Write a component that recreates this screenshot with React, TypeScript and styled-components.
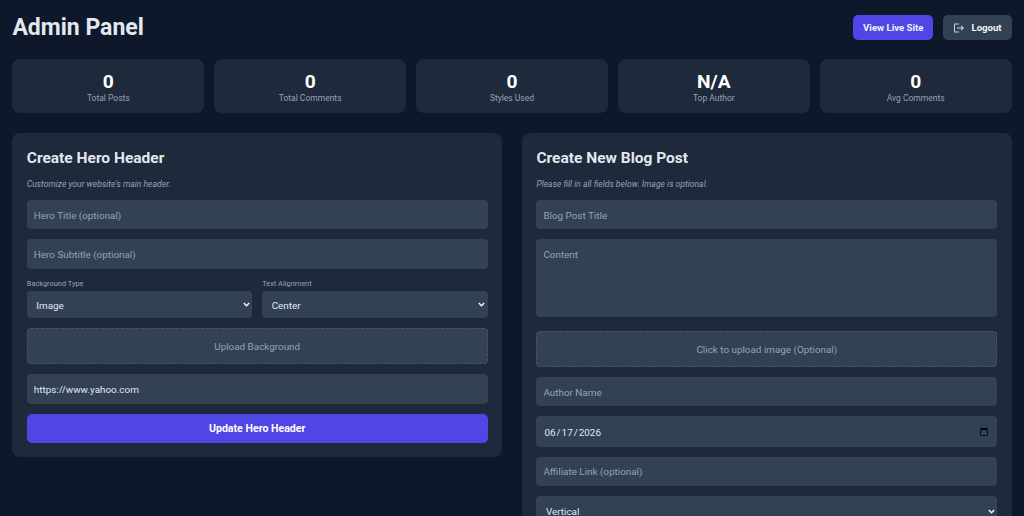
import React from "react";
import styled, { createGlobalStyle } from "styled-components";
import { MdLogout } from "react-icons/md";

const chevron = `url("data:image/svg+xml,%3Csvg xmlns='http://www.w3.org/2000/svg' viewBox='0 0 7 5'%3E%3Cpath d='M.8 1l2.7 2.7L6.2 1' fill='none' stroke='%23f1f5f9' stroke-width='1.5'/%3E%3C/svg%3E")`;

const Global = createGlobalStyle`
  html, body { margin: 0; padding: 0; background: #0f172a; }
  body { font-family: Roboto, "Noto Sans", sans-serif; color: #e2e8f0; }
  * { box-sizing: border-box; }
  ::-webkit-scrollbar { display: none; }
`;

const Page = styled.div`
  padding: 12px 12.4px;
  background: #0f172a;
  min-height: 100vh;
`;
const Header = styled.header`
  display: flex;
  justify-content: space-between;
  align-items: center;
  height: 31px;
  margin-bottom: 16px;
`;
const Title = styled.h1`
  margin: 1px 0 0;
  font-size: 23px;
  line-height: 32px;
  font-weight: 700;
  color: #e2e8f0;
`;
const Actions = styled.div`
  display: flex;
  gap: 10px;
`;
const HeaderButton = styled.button<{ $primary?: boolean }>`
  display: flex;
  align-items: center;
  gap: 6px;
  height: 25px;
  padding: 0 10px;
  border: none;
  border-radius: 5px;
  font-family: inherit;
  font-size: 9.6px;
  font-weight: 700;
  color: #f1f5f9;
  background: ${(p) => (p.$primary ? "#4f46e5" : "#334155")};
  svg { color: #cbd5e1; flex: none; }
`;
const Stats = styled.section`
  display: grid;
  grid-template-columns: repeat(5, 1fr);
  gap: 10px;
  margin-bottom: 19.6px;
`;
const Stat = styled.div`
  height: 54.4px;
  padding-top: 11px;
  border-radius: 8px;
  background: #1e293b;
  text-align: center;
`;
const StatValue = styled.div`
  font-size: 19.2px;
  line-height: 23px;
  font-weight: 700;
  color: #fff;
`;
const StatLabel = styled.div`
  font-size: 8.5px;
  line-height: 10px;
  color: #94a3b8;
`;
const Columns = styled.main`
  display: grid;
  grid-template-columns: 1fr 1fr;
  gap: 20px;
  align-items: start;
`;
const Panel = styled.section`
  padding: 14.4px;
  border-radius: 8px;
  background: #1e293b;
`;
const PanelTitle = styled.h2`
  margin: 1px 0 10.6px;
  font-size: 15.5px;
  line-height: 20px;
  font-weight: 700;
  color: #e2e8f0;
`;
const Hint = styled.p`
  margin: 0 0 10px;
  font-size: 8.6px;
  line-height: 11px;
  font-style: italic;
  color: #94a3b8;
`;
const Form = styled.form`
  display: flex;
  flex-direction: column;
  gap: 10px;
`;
const fieldBase = `
  width: 100%;
  border: none;
  outline: none;
  border-radius: 4px;
  background-color: #334155;
  color: #e2e8f0;
  font-family: inherit;
  font-size: 9.9px;
  &::placeholder { color: #94a3b8; opacity: 1; }
`;
const Input = styled.input`
  ${fieldBase}
  height: 29.4px;
  padding: 1px 7px 0;
`;
const DateInput = styled(Input)`
  height: 30.4px;
  &::-webkit-calendar-picker-indicator { width: 10px; height: 10px; padding: 0; margin-right: 1px; }
`;
const TextArea = styled.textarea`
  ${fieldBase}
  display: block;
  height: 78px;
  padding: 10px 7px;
  resize: none;
  margin-bottom: 3.6px;
`;
const Select = styled.select<{ $tall?: boolean }>`
  ${fieldBase}
  appearance: none;
  height: ${(p) => (p.$tall ? "30px" : "27.3px")};
  padding: 1px 12px 0 9.5px;
  background-image: ${chevron};
  background-repeat: no-repeat;
  background-position: right 2.5px center;
  background-size: 7px 5px;
`;
const Row = styled.div`
  display: grid;
  grid-template-columns: 1fr 1fr;
  gap: 10px;
`;
const Field = styled.label`
  display: flex;
  flex-direction: column;
  gap: 3px;
`;
const FieldLabel = styled.span`
  font-size: 7.4px;
  line-height: 9.2px;
  color: #94a3b8;
`;
const Upload = styled.div`
  display: flex;
  align-items: center;
  justify-content: center;
  height: 36px;
  padding-top: 1px;
  border: 1px dashed #475569;
  border-radius: 4px;
  background: #334155;
  font-size: 9.9px;
  color: #94a3b8;
`;
const Submit = styled.button`
  height: 29.4px;
  border: none;
  border-radius: 5px;
  background: #4f46e5;
  color: #fff;
  font-family: inherit;
  font-size: 10.6px;
  font-weight: 700;
`;

const stats = [
  ["0", "Total Posts"],
  ["0", "Total Comments"],
  ["0", "Styles Used"],
  ["N/A", "Top Author"],
  ["0", "Avg Comments"],
];

export default function App() {
  return (
    <Page>
      <Global />
      <Header>
        <Title>Admin Panel</Title>
        <Actions>
          <HeaderButton $primary>View Live Site</HeaderButton>
          <HeaderButton>
            <MdLogout size={12} />
            Logout
          </HeaderButton>
        </Actions>
      </Header>
      <Stats>
        {stats.map(([value, label]) => (
          <Stat key={label}>
            <StatValue>{value}</StatValue>
            <StatLabel>{label}</StatLabel>
          </Stat>
        ))}
      </Stats>
      <Columns>
        <Panel>
          <PanelTitle>Create Hero Header</PanelTitle>
          <Hint>Customize your website's main header.</Hint>
          <Form>
            <Input placeholder="Hero Title (optional)" />
            <Input placeholder="Hero Subtitle (optional)" />
            <Row>
              <Field>
                <FieldLabel>Background Type</FieldLabel>
                <Select defaultValue="Image">
                  <option>Image</option>
                  <option>Color</option>
                </Select>
              </Field>
              <Field>
                <FieldLabel>Text Alignment</FieldLabel>
                <Select defaultValue="Center">
                  <option>Left</option>
                  <option>Center</option>
                  <option>Right</option>
                </Select>
              </Field>
            </Row>
            <Upload>Upload Background</Upload>
            <Input defaultValue="https://www.yahoo.com" />
            <Submit type="button">Update Hero Header</Submit>
          </Form>
        </Panel>
        <Panel>
          <PanelTitle>Create New Blog Post</PanelTitle>
          <Hint>Please fill in all fields below. Image is optional.</Hint>
          <Form>
            <Input placeholder="Blog Post Title" />
            <TextArea placeholder="Content" />
            <Upload>Click to upload image (Optional)</Upload>
            <Input placeholder="Author Name" />
            <DateInput type="date" defaultValue="2026-06-17" />
            <Input placeholder="Affiliate Link (optional)" />
            <Select $tall defaultValue="Vertical">
              <option>Vertical</option>
              <option>Horizontal</option>
            </Select>
          </Form>
        </Panel>
      </Columns>
    </Page>
  );
}
